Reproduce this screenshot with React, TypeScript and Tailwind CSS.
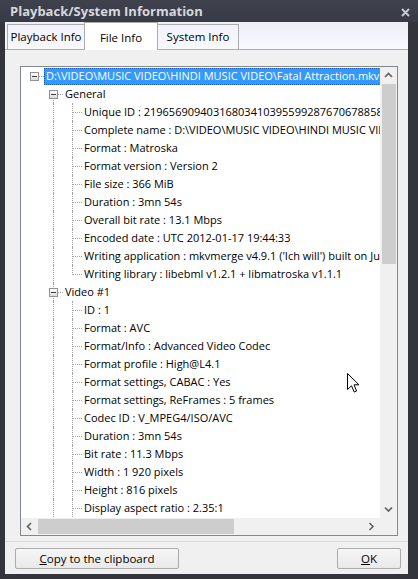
import React from "react";

type Cell = { v?: "full" | "top" | "down"; box?: boolean; h?: boolean };
type Row = { cells: Cell[]; text: string; selected?: boolean };

const leafG = (text: string, last = false): Row => ({
  cells: [{}, { v: "full" }, { v: last ? "top" : "full", h: true }],
  text,
});
const leafV = (text: string): Row => ({
  cells: [{}, { v: "full" }, { v: "full", h: true }],
  text,
});

const rows: Row[] = [
  {
    cells: [{ box: true, h: true }],
    text: "D:\\VIDEO\\MUSIC VIDEO\\HINDI MUSIC VIDEO\\Fatal Attraction.mkv",
    selected: true,
  },
  { cells: [{}, { v: "down", box: true, h: true }], text: "General" },
  leafG("Unique ID : 219656909403168034103955992876706788580 (0xA540F6D4C4A5A3B8B5E5B2C8B0A0A0A4)"),
  leafG("Complete name : D:\\VIDEO\\MUSIC VIDEO\\HINDI MUSIC VIDEO\\Fatal Attraction.mkv"),
  leafG("Format : Matroska"),
  leafG("Format version : Version 2"),
  leafG("File size : 366 MiB"),
  leafG("Duration : 3mn 54s"),
  leafG("Overall bit rate : 13.1 Mbps"),
  leafG("Encoded date : UTC 2012-01-17 19:44:33"),
  leafG("Writing application : mkvmerge v4.9.1 ('Ich will') built on Jul 11 2011 23:53:15"),
  leafG("Writing library : libebml v1.2.1 + libmatroska v1.1.1", true),
  { cells: [{}, { v: "full", box: true, h: true }], text: "Video #1" },
  leafV("ID : 1"),
  leafV("Format : AVC"),
  leafV("Format/Info : Advanced Video Codec"),
  leafV("Format profile : High@L4.1"),
  leafV("Format settings, CABAC : Yes"),
  leafV("Format settings, ReFrames : 5 frames"),
  leafV("Codec ID : V_MPEG4/ISO/AVC"),
  leafV("Duration : 3mn 54s"),
  leafV("Bit rate : 11.3 Mbps"),
  leafV("Width : 1 920 pixels"),
  leafV("Height : 816 pixels"),
  leafV("Display aspect ratio : 2.35:1"),
];

function TreeCell({ c }: { c: Cell }) {
  return (
    <div className="relative w-[19px] h-[18px] shrink-0">
      {c.v === "full" && (
        <div className="absolute left-[9px] top-0 h-[18px] border-l border-dotted border-[#a0a0a0]" />
      )}
      {c.v === "top" && (
        <div className="absolute left-[9px] top-0 h-[10px] border-l border-dotted border-[#a0a0a0]" />
      )}
      {c.v === "down" && (
        <div className="absolute left-[9px] top-[9px] h-[9px] border-l border-dotted border-[#a0a0a0]" />
      )}
      {c.h && (
        <div className="absolute left-[9px] top-[9px] w-[10px] border-t border-dotted border-[#a0a0a0]" />
      )}
      {c.box && (
        <div className="absolute left-[5px] top-[5px] w-[9px] h-[9px] border border-[#919191] bg-gradient-to-b from-white to-[#dcdcdc] flex items-center justify-center">
          <div className="w-[5px] h-px bg-[#3c3c3c]" />
        </div>
      )}
    </div>
  );
}

function Chevron({ dir }: { dir: "up" | "down" | "left" | "right" }) {
  const pts: Record<string, string> = {
    up: "1,5 4.5,1.5 8,5",
    down: "1,1.5 4.5,5 8,1.5",
    left: "5,1 1.5,4.5 5,8",
    right: "1.5,1 5,4.5 1.5,8",
  };
  const vertical = dir === "up" || dir === "down";
  return (
    <svg
      width={vertical ? 9 : 7}
      height={vertical ? 7 : 9}
      viewBox={vertical ? "0 0 9 7" : "0 0 7 9"}
    >
      <polyline points={pts[dir]} fill="none" stroke="#606060" strokeWidth="1.6" />
    </svg>
  );
}

export default function App() {
  return (
    <div className="relative w-[418px] h-[579px] bg-[#33343c] flex flex-col font-['Open_Sans',sans-serif] text-[11px] text-black overflow-hidden">
      {/* Title bar */}
      <div className="relative h-[22px] shrink-0 flex items-center pl-[10px] bg-gradient-to-b from-[#3f414d] to-[#383a45]">
        <span className="font-bold text-[13px] text-[#d8d8dc] leading-none">
          Playback/System Information
        </span>
        <svg className="absolute right-[8px] top-[8px]" width="9" height="9" viewBox="0 0 9 9">
          <path d="M1 1 L8 8 M8 1 L1 8" stroke="#c8c9d0" strokeWidth="2" />
        </svg>
      </div>

      {/* Frame + client */}
      <div className="flex-1 flex pl-[5px] pr-[10px] pb-[5px]">
        <div className="flex-1 bg-[#f0f0f0] flex flex-col">
          {/* Tab strip */}
          <div className="h-[28px] shrink-0 flex items-end border-b border-[#acacac] bg-gradient-to-b from-[#eceef8] to-[#f9faff] text-[11.5px]">
            <div className="ml-[2px] w-[78px] h-[25px] border border-b-0 border-[#acacac] bg-gradient-to-b from-[#f2f3fa] to-[#f8f9fd] flex items-center justify-center">
              Playback Info
            </div>
            <div className="relative z-10 -ml-px -mb-px w-[74px] h-[28px] border border-b-0 border-[#acacac] bg-white flex items-center justify-center pt-[2px]">
              File Info
            </div>
            <div className="-ml-px w-[82px] h-[25px] border border-b-0 border-[#acacac] bg-gradient-to-b from-[#f2f3fa] to-[#f8f9fd] flex items-center justify-center">
              System Info
            </div>
          </div>

          {/* Tab page */}
          <div className="flex-1 border-b border-[#d9d9d9] pl-[15px] pt-[16px]">
            <div className="w-[378px] h-[470px] border border-[#828790] bg-white flex flex-col">
              <div className="flex h-[451px]">
                {/* Tree content */}
                <div className="w-[359px] h-[451px] overflow-hidden pl-[4px]">
                  {rows.map((r, i) => (
                    <div key={i} className="flex h-[18px] items-center whitespace-nowrap">
                      {r.cells.map((c, j) => (
                        <TreeCell key={j} c={c} />
                      ))}
                      {r.selected ? (
                        <span className="h-[17px] mt-px px-[2px] leading-[16px] bg-[#3399ff] text-white outline-1 outline-dotted outline-[#1a5fb4] -outline-offset-1">
                          {r.text}
                        </span>
                      ) : (
                        <span className="px-[2px] leading-[18px]">{r.text}</span>
                      )}
                    </div>
                  ))}
                </div>
                {/* Vertical scrollbar */}
                <div className="w-[17px] h-[451px] bg-[#f0f0f0] flex flex-col items-center">
                  <div className="h-[17px] w-full flex items-center justify-center">
                    <Chevron dir="up" />
                  </div>
                  <div className="w-[14px] h-[180px] bg-[#cdcdcd]" />
                  <div className="flex-1" />
                  <div className="h-[17px] w-full flex items-center justify-center">
                    <Chevron dir="down" />
                  </div>
                </div>
              </div>
              {/* Horizontal scrollbar */}
              <div className="flex h-[17px]">
                <div className="w-[359px] h-[17px] bg-[#f0f0f0] flex items-center">
                  <div className="w-[17px] h-full flex items-center justify-center">
                    <Chevron dir="left" />
                  </div>
                  <div className="w-[196px] h-[15px] bg-[#cdcdcd]" />
                  <div className="flex-1" />
                  <div className="w-[17px] h-full flex items-center justify-center">
                    <Chevron dir="right" />
                  </div>
                </div>
                <div className="w-[17px] h-[17px] bg-[#f0f0f0]" />
              </div>
            </div>
          </div>

          {/* Buttons */}
          <div className="h-[32px] shrink-0 flex items-start pt-[6px] text-[11.5px]">
            <button className="ml-[10px] w-[164px] h-[21px] border border-[#acacac] rounded-[2px] bg-gradient-to-b from-[#f6f6f6] to-[#e9e9e9] flex items-center justify-center leading-none">
              <span>
                <span className="underline">C</span>opy to the clipboard
              </span>
            </button>
            <button className="ml-auto mr-[7px] w-[64px] h-[21px] border border-[#acacac] rounded-[2px] bg-gradient-to-b from-[#f6f6f6] to-[#e9e9e9] flex items-center justify-center leading-none">
              <span>
                <span className="underline">O</span>K
              </span>
            </button>
          </div>
        </div>
      </div>

      {/* Mouse cursor */}
      <svg className="absolute left-[347px] top-[373px]" width="13" height="21" viewBox="0 0 13 21">
        <path
          d="M0.5 0.5 L0.5 16.5 L4.5 12.8 L7.2 19 L9.6 18 L7 11.8 L12 11.8 Z"
          fill="white"
          stroke="black"
          strokeWidth="1"
          strokeLinejoin="miter"
        />
      </svg>
    </div>
  );
}
